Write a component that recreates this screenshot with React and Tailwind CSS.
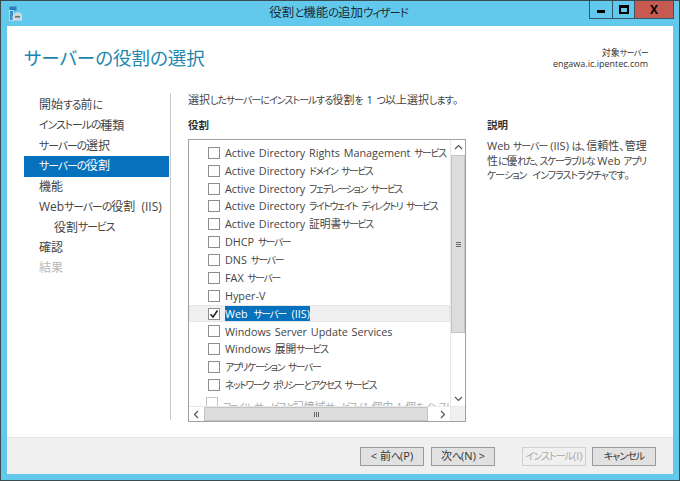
import React from 'react';

const font = "font-['Open_Sans','Noto_Sans_CJK_JP',sans-serif] [font-feature-settings:'palt']";

const steps = [
  { label: '開始する前に' },
  { label: 'インストールの種類' },
  { label: 'サーバーの選択' },
  { label: 'サーバーの役割', active: true },
  { label: '機能' },
  { label: 'Web サーバーの役割 (IIS)' },
  { label: '役割サービス', sub: true },
  { label: '確認' },
  { label: '結果', disabled: true },
];

const roles = [
  'Active Directory Rights Management サービス',
  'Active Directory ドメイン サービス',
  'Active Directory フェデレーション サービス',
  'Active Directory ライトウェイト ディレクトリ サービス',
  'Active Directory 証明書サービス',
  'DHCP サーバー',
  'DNS サーバー',
  'FAX サーバー',
  'Hyper-V',
  'Web サーバー (IIS)',
  'Windows Server Update Services',
  'Windows 展開サービス',
  'アプリケーション サーバー',
  'ネットワーク ポリシーとアクセス サービス',
];

// the original UI font has narrow kana, so kana runs get squeezed
const K = ({ children, kana = 'text-[0.9em] tracking-[-0.09em]' }) => (
  <>
    {children.split(/([\u3040-\u30FF]+)/).map((part, i) =>
      i % 2 ? <span key={i} className={kana}>{part}</span> : part
    )}
  </>
);

const Chevron = ({ d }) => (
  <svg width="9" height="9" viewBox="0 0 9 9" fill="none" stroke="#555" strokeWidth="1.2">
    <path d={d} />
  </svg>
);

const RoleRow = ({ label, checked }) => (
  <div className={`flex h-[17.85px] shrink-0 items-center pl-[19px] ${checked ? 'bg-[#f0f0f0] outline outline-[#e6e6e6] -outline-offset-1' : ''}`}>
    <span className="flex h-[12px] w-[12px] shrink-0 items-center justify-center border border-[#8e8e8e] bg-white">
      {checked && (
        <svg width="10" height="10" viewBox="0 0 10 10" fill="none" stroke="#222" strokeWidth="1.6">
          <path d="M1.5 5.2 L4 8 L8.5 1.5" />
        </svg>
      )}
    </span>
    <span className={`ml-[5px] whitespace-nowrap text-[10.8px] leading-[15px] [word-spacing:1px] ${checked ? 'bg-[#0672bd] text-white [word-spacing:3px]' : 'text-[#444]'}`}>
      <K kana="text-[0.9em] tracking-[-0.13em]">{label}</K>
    </span>
  </div>
);

const Button = ({ label, disabled, className = '' }) => (
  <button className={`flex h-[19px] w-[64px] items-center justify-center whitespace-nowrap border text-[11px] ${disabled ? 'border-[#d0d0d0] bg-[#f0f0f0] text-[#a8a8a8]' : 'border-[#9a9a9a] bg-[#e1e1e1] text-[#333]'} ${className}`}>
    <K>{label}</K>
  </button>
);

const App = () => {
  return (
    <div className={`flex h-[481px] w-[680px] flex-col overflow-hidden border border-[#3c4a52] bg-[#63c9ec] ${font}`}>
      {/* Title bar */}
      <div className="grid h-[25px] shrink-0 grid-cols-[1fr_auto_1fr] pl-[8px] pr-[5px]">
        <div className="flex items-center">
          <svg width="13" height="15" viewBox="0 0 13 15">
            <rect x="0.5" y="0.5" width="7" height="4" fill="#2b7fb8" />
            <rect x="0.5" y="4.5" width="4" height="10" fill="#3b8ec6" stroke="#e8f6fb" strokeWidth="0.6" />
            <path d="M4 14 V10 L7 7 H11 L13 10 V14 Z" fill="#c9d3d8" stroke="#f1f7f9" strokeWidth="0.7" />
            <rect x="6" y="10" width="5" height="1.5" fill="#5e7380" />
          </svg>
        </div>
        <div className="-ml-[6px] flex items-center text-[12.5px] text-[#1a2a33]"><K>役割と機能の追加ウィザード</K></div>
        <div className="flex justify-end">
          <div className="flex h-[18px] border border-t-0 border-[#34566a]">
            <div className="flex w-[23px] items-center justify-center border-r border-[#34566a]">
              <div className="mt-[3px] h-[3px] w-[8px] bg-black" />
            </div>
            <div className="flex w-[22px] items-center justify-center border-r border-[#34566a]">
              <div className="h-[9px] w-[10px] border-2 border-t-[3px] border-black" />
            </div>
            <div className="flex w-[38px] items-center justify-center bg-[#c75a50] text-[12px] font-bold leading-none text-black">X</div>
          </div>
        </div>
      </div>

      {/* Client area */}
      <div className="mx-[6px] mb-[6px] flex min-h-0 flex-1 flex-col bg-white">
        <div className="flex h-[67px] shrink-0 justify-between pl-[17px] pr-[25px]">
          <h1 className="mt-[19px] text-[18.5px] font-normal leading-[26px] text-[#1d86ad]">サーバーの役割の選択</h1>
          <div className="mt-[22px] text-right text-[9px] leading-[10.5px] text-[#333]">
            <div><K>対象サーバー</K></div>
            <div>engawa.ic.ipentec.com</div>
          </div>
        </div>

        <div className="flex min-h-0 flex-1 pl-[17px]">
          {/* Step list */}
          <nav className="mb-[17px] w-[147px] shrink-0 border-r border-[#c8c8c8] pr-[1px]">
            <div className="mt-[2px] flex flex-col">
              {steps.map(s => (
                <div
                  key={s.label}
                  className={`flex h-[20.4px] items-center whitespace-nowrap text-[12px] [word-spacing:3px] ${s.sub ? 'pl-[30px]' : 'pl-[15px]'} ${s.active ? 'bg-[#0672bd] text-white' : s.disabled ? 'text-[#b8b8b8]' : 'text-[#444]'}`}
                >
                  <K>{s.label}</K>
                </div>
              ))}
            </div>
          </nav>

          {/* Main panel */}
          <div className="ml-[17px] flex min-h-0 flex-1 flex-col">
            <p className="text-[11px] leading-[14px] text-[#444] [word-spacing:1px]"><K>選択したサーバーにインストールする役割を 1 つ以上選択します。</K></p>
            <div className="mt-[11px] flex min-h-0 flex-1 gap-[21px]">
              <div className="flex w-[278px] shrink-0 flex-col">
                <div className="text-[10.5px] font-bold leading-[14px] text-[#333]">役割</div>
                <div className="mt-[7px] mb-[16px] grid h-[283px] grid-cols-[1fr_15px] grid-rows-[1fr_15px] border border-[#a0a0a0]">
                  <div className="flex min-h-0 flex-col overflow-hidden pt-[4px]">
                    {roles.map(r => (
                      <RoleRow key={r} label={r} checked={r === 'Web サーバー (IIS)'} />
                    ))}
                    {/* half hidden row at the bottom edge */}
                    <div className="flex h-[17px] shrink-0 items-start pl-[2px] pt-[3px]">
                      <span className="mt-[2px] h-[2px] w-[2px] bg-[#999]" />
                      <span className="ml-[15px] h-[12px] w-[12px] shrink-0 border border-[#c4c4c4]" />
                      <span className="ml-[5px] whitespace-nowrap pt-[2px] text-[10.8px] leading-[15px] text-[#aaa]"><K kana="text-[0.9em] tracking-[-0.13em]">ファイル サービスと記憶域サービス (1 個中 1 個をインストール済み)</K></span>
                    </div>
                  </div>
                  {/* Vertical scrollbar */}
                  <div className="flex flex-col border-l border-[#e8e8e8]">
                    <div className="flex h-[15px] items-center justify-center"><Chevron d="M1 6 L4.5 2.5 L8 6" /></div>
                    <div className="flex h-[178px] flex-col items-center justify-center gap-[1px] border border-[#c4c4c4] bg-[#dcdcdc]">
                      <div className="h-[1px] w-[5px] bg-[#666]" />
                      <div className="h-[1px] w-[5px] bg-[#666]" />
                      <div className="h-[1px] w-[5px] bg-[#666]" />
                    </div>
                    <div className="flex-1" />
                    <div className="flex h-[15px] items-center justify-center"><Chevron d="M1 3 L4.5 6.5 L8 3" /></div>
                  </div>
                  {/* Horizontal scrollbar */}
                  <div className="flex border-t border-[#e8e8e8]">
                    <div className="flex w-[15px] items-center justify-center"><Chevron d="M6 1 L2.5 4.5 L6 8" /></div>
                    <div className="flex w-[224px] items-center justify-center gap-[1px] border border-[#c4c4c4] bg-[#dcdcdc]">
                      <div className="h-[5px] w-[1px] bg-[#666]" />
                      <div className="h-[5px] w-[1px] bg-[#666]" />
                      <div className="h-[5px] w-[1px] bg-[#666]" />
                    </div>
                    <div className="flex-1" />
                    <div className="flex w-[15px] items-center justify-center"><Chevron d="M3 1 L6.5 4.5 L3 8" /></div>
                  </div>
                  <div className="border-t border-l border-[#e8e8e8] bg-[#f0f0f0]" />
                </div>
              </div>
              <div className="w-[165px]">
                <div className="text-[10.5px] font-bold leading-[14px] text-[#333]">説明</div>
                <p className="mt-[7px] whitespace-nowrap text-[11px] leading-[13.5px] text-[#444]">
                  <K>Web サーバー (IIS) は、信頼性、管理</K><br />
                  <K kana="text-[0.9em] tracking-[-0.13em]">性に優れた、スケーラブルな Web アプリ</K><br />
                  <span className="[word-spacing:3px]"><K>ケーション インフラストラクチャです。</K></span>
                </p>
              </div>
            </div>
          </div>
        </div>

        {/* Footer */}
        <div className="flex h-[37px] shrink-0 items-center border-t border-[#e3e3e3] bg-[#f0f0f0] pl-[353px]">
          <Button label="< 前へ(P)" />
          <Button label="次へ(N) >" className="ml-[7px]" />
          <Button label="インストール(I)" disabled className="ml-[27px]" />
          <Button label="キャンセル" className="ml-[6px]" />
        </div>
      </div>
    </div>
  );
};

export default App;
